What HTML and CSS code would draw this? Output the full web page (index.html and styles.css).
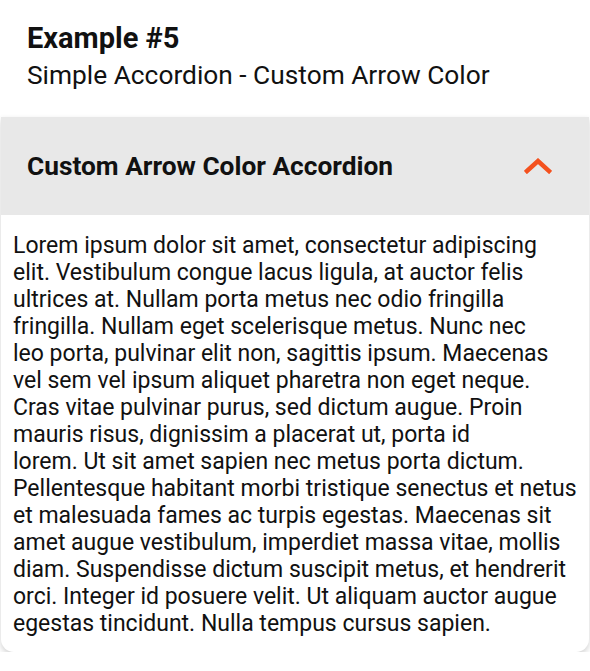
FILE: index.html
```html
<!DOCTYPE html>
<html>
<head>
<meta charset="utf-8">
<link rel="stylesheet" href="styles.css">
</head>
<body>
<div class="intro">
  <h1 class="title">Example #5</h1>
  <p class="subtitle">Simple Accordion - Custom Arrow Color</p>
</div>
<div class="card">
  <div class="header">
    <span class="header-text">Custom Arrow Color Accordion</span>
    <svg class="chevron" width="28" height="16" viewBox="0 0 28 16"><path d="M3 13 L14 3 L25 13" fill="none" stroke="#f4511e" stroke-width="4.5" stroke-linecap="square" stroke-linejoin="miter"/></svg>
  </div>
  <p class="body">Lorem ipsum dolor sit amet, consectetur adipiscing<br>
elit. Vestibulum congue lacus ligula, at auctor felis<br>
ultrices at. Nullam porta metus nec odio fringilla<br>
fringilla. Nullam eget scelerisque metus. Nunc nec<br>
leo porta, pulvinar elit non, sagittis ipsum. Maecenas<br>
vel sem vel ipsum aliquet pharetra non eget neque.<br>
Cras vitae pulvinar purus, sed dictum augue. Proin<br>
mauris risus, dignissim a placerat ut, porta id<br>
lorem. Ut sit amet sapien nec metus porta dictum.<br>
Pellentesque habitant morbi tristique senectus et netus<br>
et malesuada fames ac turpis egestas. Maecenas sit<br>
amet augue vestibulum, imperdiet massa vitae, mollis<br>
diam. Suspendisse dictum suscipit metus, et hendrerit<br>
orci. Integer id posuere velit. Ut aliquam auctor augue<br>
egestas tincidunt. Nulla tempus cursus sapien.</p>
</div>
</body>
</html>
```
FILE: styles.css
```css
html, body {
  margin: 0;
  padding: 0;
  background: #ffffff;
}
body {
  font-family: Roboto, "Liberation Sans", sans-serif;
  color: #111;
  width: 590px;
}
.intro {
  padding: 20px 27px 0;
  height: 117px;
  box-sizing: border-box;
}
.title {
  margin: 0;
  font-size: 29px;
  font-weight: 700;
  line-height: 36px;
}
.subtitle {
  margin: 0;
  font-size: 26.3px;
  font-weight: 400;
  line-height: 38px;
}
.card {
  margin: 0 1px;
  border-radius: 0 0 13px 13px;
  box-shadow: 0 3px 6px rgba(0,0,0,0.18);
  overflow: hidden;
  background: #fff;
}
.header {
  background: #e8e8e8;
  height: 98px;
  display: flex;
  align-items: center;
  justify-content: space-between;
  padding: 0 37px 0 26px;
}
.header-text {
  font-size: 26.3px;
  font-weight: 700;
  color: #111;
}
.chevron {
  display: block;
}
.body {
  margin: 0;
  padding: 17px 0 15px 12px;
  font-size: 23px;
  line-height: 27px;
  color: #111;
  white-space: nowrap;
}
```
